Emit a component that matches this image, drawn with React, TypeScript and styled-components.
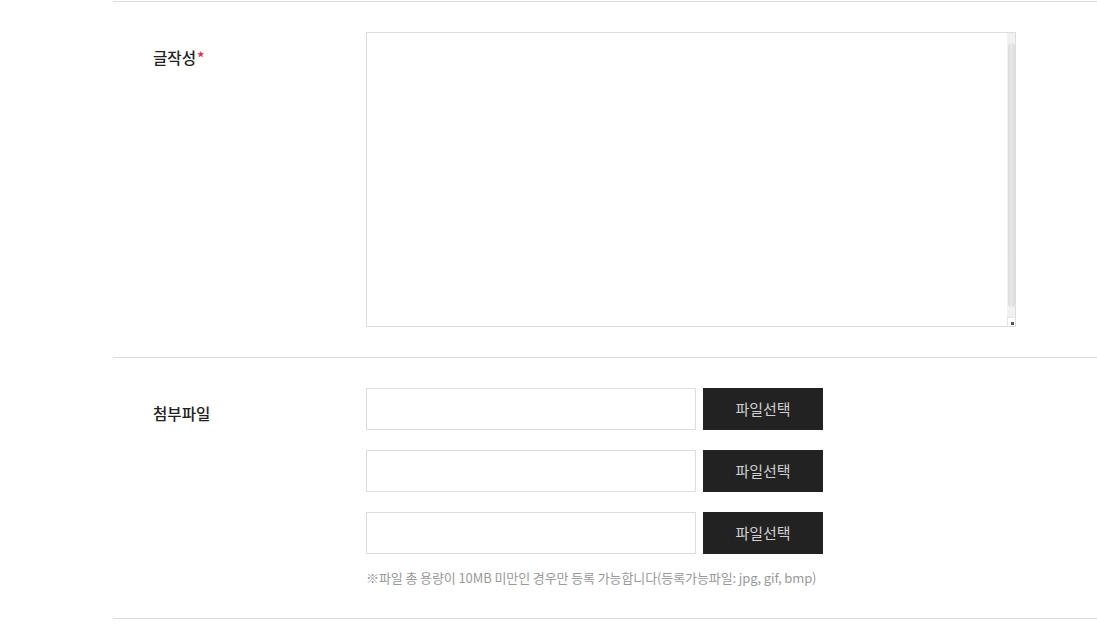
import React from "react";
import styled, { createGlobalStyle } from "styled-components";

const Global = createGlobalStyle`
  html, body { margin: 0; padding: 0; background: #fff; }
  body { font-family: "Noto Sans CJK KR", "Noto Sans", sans-serif; color: #222; }
  * { box-sizing: border-box; }
`;

const Form = styled.div`
  margin-left: 113px;
  padding-top: 1px;
`;

const Row = styled.div`
  display: flex;
  border-top: 1px solid #dddddd;
  padding: 30px 0 30px 40px;
  &:last-child { border-bottom: 1px solid #dddddd; }
`;

const Label = styled.div`
  width: 213px;
  flex-shrink: 0;
  margin-top: 15px;
  font-size: 15.6px;
  line-height: 20px;
  font-weight: 500;
  color: #222;
`;

const Star = styled.span`
  color: #e8244d;
  margin-left: 1px;
`;

const Field = styled.div`
  display: flex;
  flex-direction: column;
`;

const AreaWrap = styled.div`
  position: relative;
  width: 650px;
  height: 295px;
`;

const TextArea = styled.textarea`
  display: block;
  width: 100%;
  height: 100%;
  margin: 0;
  border: 1px solid #dddddd;
  outline: none;
  resize: none;
  font-family: inherit;
  padding: 10px 20px 10px 10px;
`;

const ScrollTrack = styled.div`
  position: absolute;
  top: 1px;
  right: 1px;
  bottom: 10px;
  width: 8px;
  background: #f1f1f1;
  padding: 10px 0;
  pointer-events: none;
`;

const ScrollThumb = styled.div`
  height: 100%;
  margin: 0 0.5px;
  border-radius: 4px;
  background: linear-gradient(to right, #dcdcdc, #e8e8e8 50%, #dcdcdc);
`;

const Resizer = styled.div`
  position: absolute;
  right: 1px;
  bottom: 1px;
  width: 8px;
  height: 9px;
  background: #fff;
  border-left: 1px solid #e6e6e6;
  border-top: 1px solid #e6e6e6;
  pointer-events: none;
  &::after {
    content: "";
    position: absolute;
    right: 1px;
    bottom: 1px;
    width: 3px;
    height: 3px;
    background: #555;
  }
`;

const FileList = styled.div`
  display: flex;
  flex-direction: column;
  gap: 20px;
`;

const FileRow = styled.div`
  display: flex;
  gap: 7px;
`;

const FileInput = styled.input`
  width: 330px;
  height: 42px;
  margin: 0;
  border: 1px solid #dddddd;
  outline: none;
  padding: 0 10px;
  font-family: inherit;
`;

const FileButton = styled.button`
  width: 120px;
  height: 42px;
  margin: 0;
  border: 0;
  background: #222222;
  color: #cfcfcf;
  font-family: inherit;
  font-size: 15px;
  cursor: pointer;
  padding: 0 0 2px;
`;

const Note = styled.p`
  margin: 14px 0 0;
  font-size: 13px;
  line-height: 20px;
  color: #999999;
  letter-spacing: -0.1px;
`;

export default function App() {
  return (
    <>
      <Global />
      <Form>
        <Row>
          <Label>
            글작성<Star>*</Star>
          </Label>
          <Field>
            <AreaWrap>
              <TextArea />
              <ScrollTrack>
                <ScrollThumb />
              </ScrollTrack>
              <Resizer />
            </AreaWrap>
          </Field>
        </Row>
        <Row>
          <Label>첨부파일</Label>
          <Field>
            <FileList>
              {[0, 1, 2].map((i) => (
                <FileRow key={i}>
                  <FileInput type="text" readOnly />
                  <FileButton type="button">파일선택</FileButton>
                </FileRow>
              ))}
            </FileList>
            <Note>※파일 총 용량이 10MB 미만인 경우만 등록 가능합니다(등록가능파일: jpg, gif, bmp)</Note>
          </Field>
        </Row>
      </Form>
    </>
  );
}
